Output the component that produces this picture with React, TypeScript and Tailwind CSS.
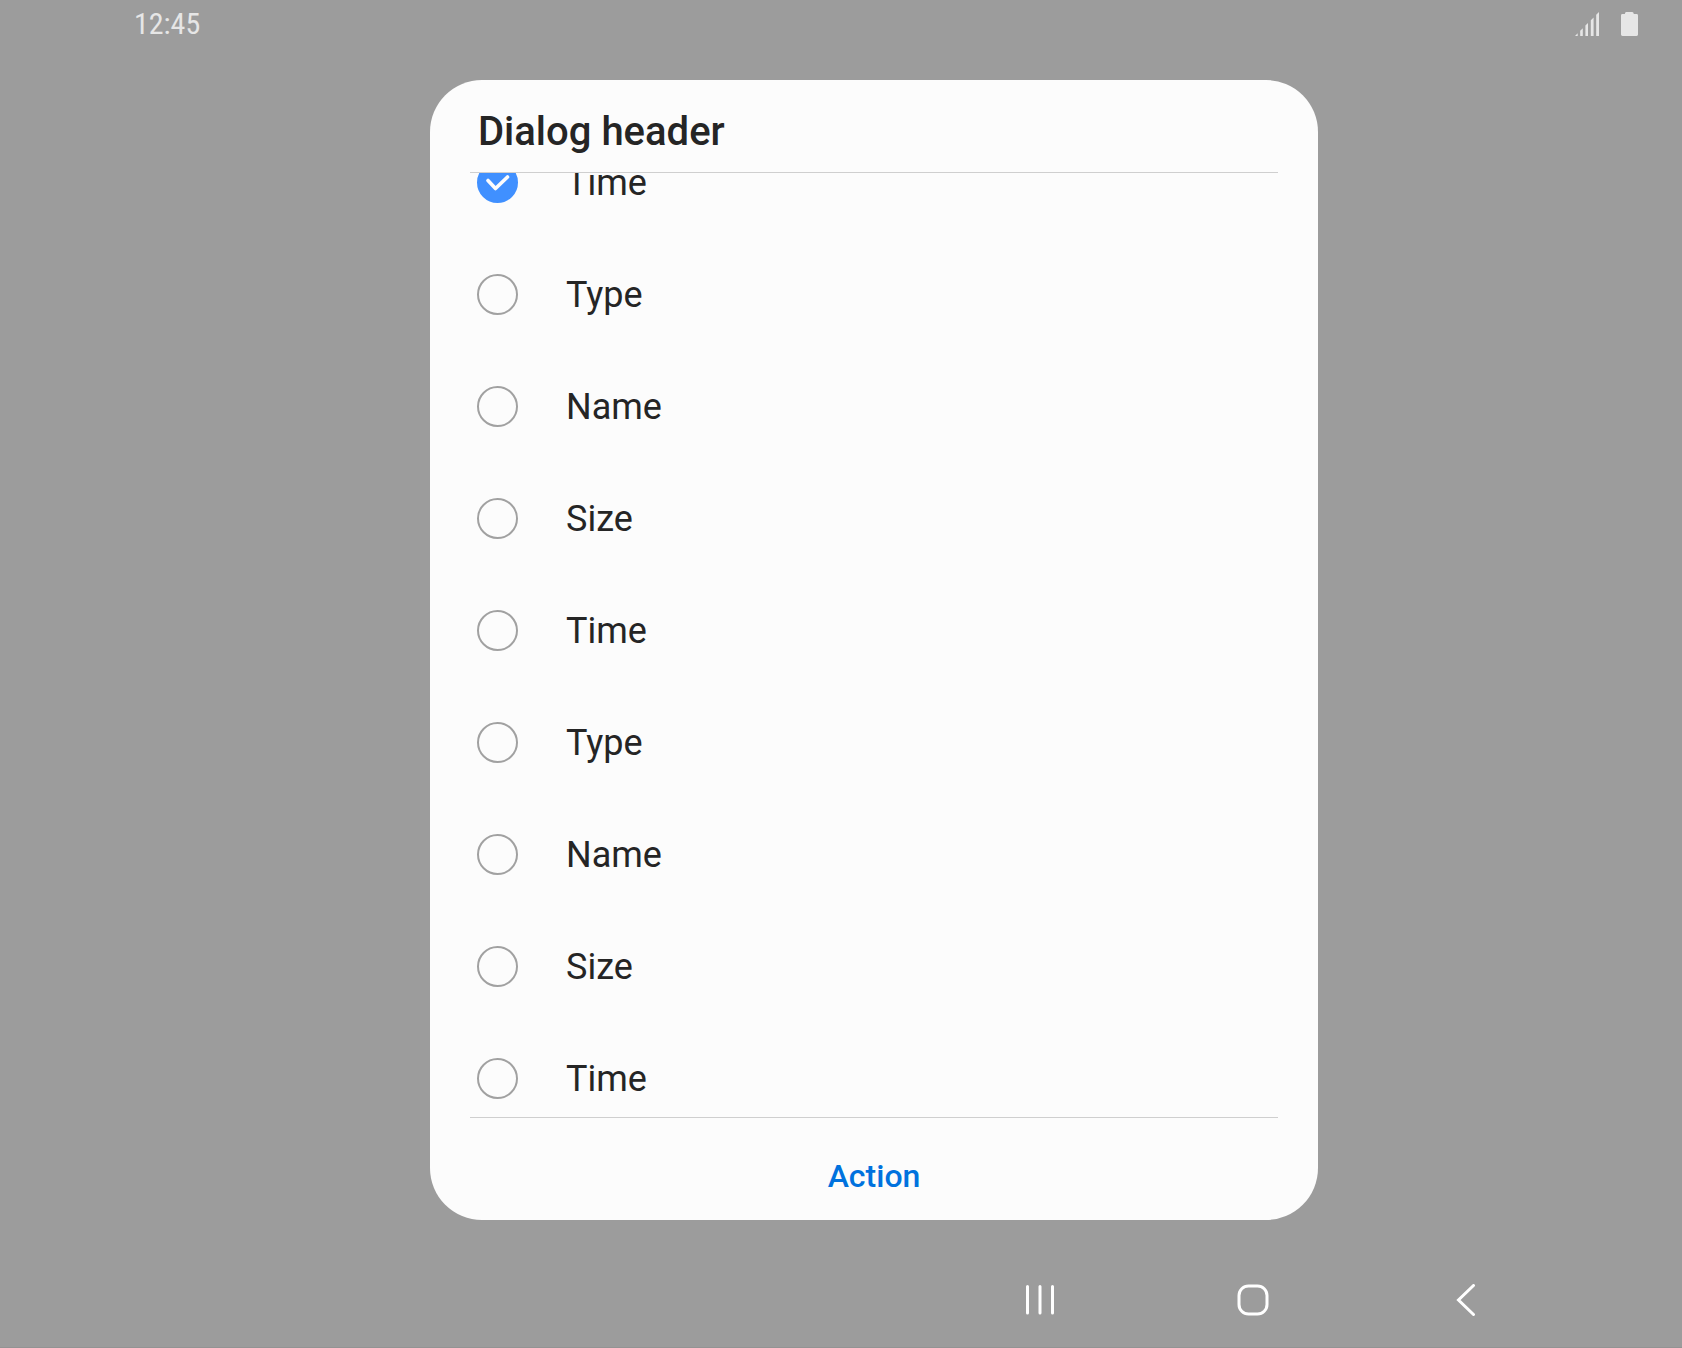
import { useLayoutEffect, useRef, useState } from "react";

const OPTIONS = ["Time", "Type", "Name", "Size", "Time", "Type", "Name", "Size", "Time"];

function SignalIcon() {
  return (
    <svg width="24" height="24" viewBox="0 0 24 24" fill="#e6e6e6" aria-label="Signal">
      <path d="M0 24L2.7 21.3V24ZM5.2 24V18.8L7.8 16.2V24ZM10.4 24V13.6L13 11V24ZM15.8 24V8.2L18.6 5.4V24ZM21.2 24V2.8L24 0V24Z" />
    </svg>
  );
}

function BatteryIcon() {
  return (
    <svg width="17" height="24" viewBox="0 0 17 24" fill="#e6e6e6" aria-label="Battery">
      <path d="M5.2 0H11.2Q12.6 0 12.8 2H15.6Q17 2 17 3.4V22.6Q17 24 15.6 24H1.4Q0 24 0 22.6V3.4Q0 2 1.4 2H3.8Q4 0 5.2 0Z" />
    </svg>
  );
}

function StatusBar() {
  return (
    <header className="flex h-12 shrink-0 items-center justify-between pr-11 pl-[134px]">
      <time className="font-['Roboto_Condensed',Roboto,sans-serif] text-[30px] leading-8 text-[#e6e6e6]">12:45</time>
      <div className="flex items-center gap-[22px]">
        <SignalIcon />
        <BatteryIcon />
      </div>
    </header>
  );
}

function Option({
  id,
  label,
  checked,
  onSelect,
}: {
  id: string;
  label: string;
  checked: boolean;
  onSelect: () => void;
}) {
  return (
    <li className="flex h-28 items-center">
      <label htmlFor={id} className="flex cursor-pointer items-center gap-12">
        <span className="grid size-[41px] place-items-center">
          <input
            id={id}
            type="radio"
            name="dialog-option"
            checked={checked}
            onChange={onSelect}
            className="col-start-1 row-start-1 size-[41px] appearance-none rounded-full border-2 border-[#a1a1a1] checked:border-[#4090ff] checked:bg-[#4090ff]"
          />
          {checked && (
            <svg
              className="pointer-events-none col-start-1 row-start-1"
              width="41"
              height="41"
              viewBox="0 0 41 41"
              fill="none"
              stroke="#fcfcfc"
              strokeWidth="3.6"
              strokeLinecap="round"
              strokeLinejoin="round"
              aria-hidden="true"
            >
              <path d="M11 18.5L18.5 26.500L30.500 15" />
            </svg>
          )}
        </span>
        <span className="pt-0.5 text-[36px] leading-[48px]">{label}</span>
      </label>
    </li>
  );
}

function NavBar() {
  const button = "flex h-16 w-[213px] items-center justify-center";
  return (
    <nav className="flex h-32 shrink-0 items-center justify-end border-b border-[#939393] pt-8 pr-[110px]">
      <button type="button" aria-label="Recent apps" className={button}>
        <svg width="32" height="32" viewBox="0 0 32 32" stroke="#fff" strokeWidth="3" strokeLinecap="round">
          <path d="M3.500 2.500V29M16 2.500V29M28.500 2.500V29" />
        </svg>
      </button>
      <button type="button" aria-label="Home" className={button}>
        <svg width="32" height="32" viewBox="0 0 32 32" fill="none" stroke="#fff" strokeWidth="3">
          <rect x="2" y="2" width="28" height="28" rx="9.500" />
        </svg>
      </button>
      <button type="button" aria-label="Back" className={button}>
        <svg
          width="32"
          height="32"
          viewBox="0 0 32 32"
          fill="none"
          stroke="#fff"
          strokeWidth="3"
          strokeLinecap="round"
          strokeLinejoin="miter"
        >
          <path d="M23.500 1.500L8.500 16L23.500 30.500" />
        </svg>
      </button>
    </nav>
  );
}

export default function App() {
  const [selected, setSelected] = useState(0);
  const list = useRef<HTMLUListElement>(null);

  useLayoutEffect(() => {
    if (list.current) list.current.scrollTop = 47;
  }, []);

  return (
    <div className="flex h-screen flex-col bg-[#9c9c9c] font-[Roboto,sans-serif] text-[#252525]">
      <StatusBar />
      <main className="flex min-h-0 flex-1 justify-center pt-8 pl-[66px]">
        <section
          role="dialog"
          aria-labelledby="dialog-title"
          className="flex w-full max-w-[888px] flex-col rounded-[52px] bg-[#fcfcfc] px-10"
        >
          <h1 id="dialog-title" className="border-b border-[#cfcfcf] px-2 pt-7 pb-4 text-[40px] leading-[48px] font-medium">
            Dialog header
          </h1>
          <ul ref={list} className="min-h-0 flex-1 [scrollbar-width:none] overflow-y-auto px-[7px]">
            {OPTIONS.map((label, i) => (
              <Option
                key={i}
                id={`option-${i}`}
                label={label}
                checked={selected === i}
                onSelect={() => setSelected(i)}
              />
            ))}
          </ul>
          <div className="flex justify-center border-t border-[#cfcfcf] pt-[34px] pb-5">
            <button type="button" className="h-12 px-6 text-[32px] leading-[48px] font-medium text-[#0072de]">
              Action
            </button>
          </div>
        </section>
      </main>
      <NavBar />
    </div>
  );
}
